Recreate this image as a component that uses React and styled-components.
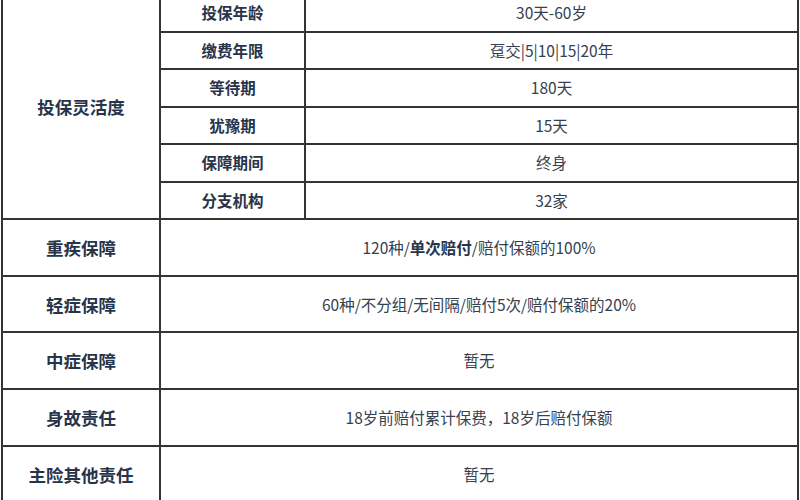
import React from "react";
import styled, { createGlobalStyle } from "styled-components";

const GlobalStyle = createGlobalStyle`
  html, body {
    margin: 0;
    padding: 0;
    background: #ffffff;
  }
  body {
    font-family: "Noto Sans CJK SC", "Noto Sans", sans-serif;
    width: 800px;
    height: 500px;
    overflow: hidden;
  }
`;

const Sheet = styled.div`
  width: 800px;
  height: 500px;
  overflow: hidden;
`;

const Table = styled.table`
  border-collapse: collapse;
  table-layout: fixed;
  width: 798px;
  margin: -7px 0 0 1px;
  color: #2c394c;
`;

const Cell = styled.td`
  border: 2px solid #343434;
  text-align: center;
  vertical-align: middle;
  padding: 0;
  height: ${(p) => p.$h}px;
  font-size: ${(p) => (p.$main ? "17.5px" : "15.5px")};
  font-weight: ${(p) => (p.$main || p.$sub ? 700 : 400)};
  color: ${(p) => (p.$main || p.$sub ? "#27344a" : "#36414f")};
  line-height: 1.2;
  white-space: nowrap;
`;

const Strong = styled.b`
  font-weight: 700;
  color: #27344a;
`;

const flexRows = [
  ["投保年龄", "30天-60岁"],
  ["缴费年限", "趸交|5|10|15|20年"],
  ["等待期", "180天"],
  ["犹豫期", "15天"],
  ["保障期间", "终身"],
  ["分支机构", "32家"],
];

const coverRows = [
  [
    "重疾保障",
    <>
      120种/<Strong>单次赔付</Strong>/赔付保额的100%
    </>,
  ],
  ["轻症保障", "60种/不分组/无间隔/赔付5次/赔付保额的20%"],
  ["中症保障", "暂无"],
  ["身故责任", "18岁前赔付累计保费，18岁后赔付保额"],
  ["主险其他责任", "暂无"],
];

const App = () => {
  return (
    <Sheet>
      <GlobalStyle />
      <Table>
        <colgroup>
          <col style={{ width: 158 }} />
          <col style={{ width: 145 }} />
          <col />
        </colgroup>
        <tbody>
          {flexRows.map(([label, value], i) => (
            <tr key={label}>
              {i === 0 && (
                <Cell $main rowSpan={flexRows.length}>
                  投保灵活度
                </Cell>
              )}
              <Cell $sub $h={35.5}>
                {label}
              </Cell>
              <Cell $h={35.5}>{value}</Cell>
            </tr>
          ))}
          {coverRows.map(([label, value]) => (
            <tr key={label}>
              <Cell $main $h={54.7}>
                {label}
              </Cell>
              <Cell colSpan={2} $h={54.7}>
                {value}
              </Cell>
            </tr>
          ))}
        </tbody>
      </Table>
    </Sheet>
  );
};

export default App;
